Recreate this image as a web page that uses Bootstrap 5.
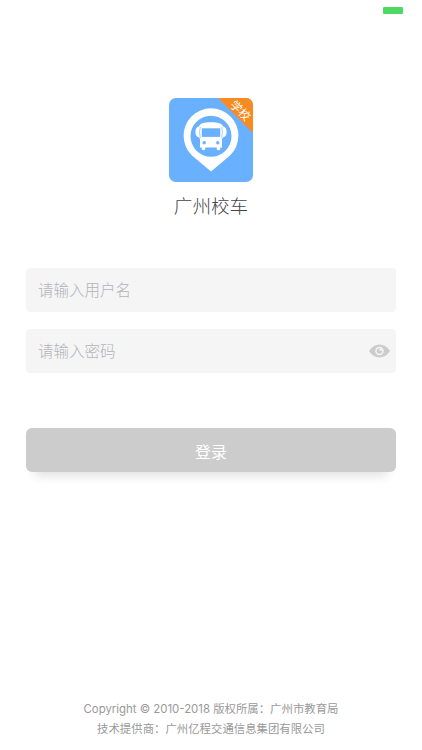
<!DOCTYPE html>
<html lang="zh-CN">
<head>
<meta charset="utf-8">
<meta name="viewport" content="width=device-width, initial-scale=1">
<title>广州校车</title>
<link href="https://cdn.jsdelivr.net/npm/bootstrap@5.3.0/dist/css/bootstrap.min.css" rel="stylesheet">
<style>
body{font-family:Inter,"Noto Sans CJK SC",sans-serif;height:750px;overflow:hidden}
.status-strip{height:98px;padding:7px 19px 0}
.battery{width:20px;height:7px;border-radius:1px;background:#4cd964}
.app-logo{width:84px;height:84px}
.app-name{font-size:18.6px;line-height:28px;margin-top:10px;color:#444;font-weight:300}
.login-form{margin-top:47.500px;padding:0 26px}
.login-form .field{height:44.500px;background:#f5f5f5;border-radius:4px;padding:0 6px 0 12px}
.login-form .field + .field{margin-top:16.500px}
.field .form-control{font-size:15.5px;line-height:24px;font-weight:300;margin-top:2px}
.field .form-control::placeholder{color:#b3b3b9;opacity:1}
.login-btn{height:44.500px;margin-top:54.500px;border-radius:6px;background:#ccc;color:#fff;font-size:16px;box-shadow:0 12px 12px -9px rgba(0,0,0,.14)}
.login-btn,.login-btn:hover{background:#ccc;color:#fff}
.copyright{font-size:11.4px;line-height:20px;color:#999;padding-bottom:11px}
</style>
</head>
<body class="bg-white d-flex flex-column">
<header class="status-strip d-flex justify-content-end flex-shrink-0"><span class="battery"></span></header>
<main class="flex-grow-1">
  <div class="d-flex flex-column align-items-center">
    <svg class="app-logo" viewBox="0 0 84 84" role="img" aria-label="广州校车">
      <rect width="84" height="84" rx="7" fill="#69b1ff"/>
      <path fill="#f78b21" d="M49 0h28a7 7 0 0 1 7 7v28z"/>
      <text transform="translate(71.5 12.5) rotate(45)" text-anchor="middle" y="4.300" font-size="11.500" fill="#fff">学校</text>
      <path fill="#fff" fill-rule="evenodd" d="M42 73.5 23 57.5A27.4 27.4 0 1 1 61 57.5ZM42 17.7a20.5 20.5 0 1 0 0 41a20.5 20.5 0 1 0 0-41Z"/>
      <path fill="#fff" d="M29.800 28.500C31 25.500 35 24.300 42 24.300S53 25.500 54.200 28.500Q57.600 29 57.600 34Q57.600 38.500 54.200 39.300L53 41V49.500H51.200V51.500Q49.500 53 47.800 51.500V49.500H36.200V51.500Q34.500 53 32.800 51.500V49.500H31V41L29.800 39.300Q26.400 38.500 26.400 34Q26.400 29 29.800 28.500Z"/>
      <path fill="#69b1ff" d="M32.800 30.300h18.400v8.600H32.800z"/>
      <path fill="none" stroke="#69b1ff" stroke-width=".6" d="M31.300 29Q29.800 34 31.300 40M52.700 29Q54.200 34 52.700 40"/>
      <circle cx="35.200" cy="44.700" r="1.700" fill="#69b1ff"/><circle cx="48.800" cy="44.700" r="1.700" fill="#69b1ff"/>
    </svg>
    <h1 class="app-name mb-0">广州校车</h1>
  </div>
  <form class="login-form">
    <div class="field d-flex align-items-center">
      <input class="form-control border-0 bg-transparent shadow-none p-0" type="text" placeholder="请输入用户名" aria-label="用户名">
    </div>
    <div class="field d-flex align-items-center">
      <input class="form-control border-0 bg-transparent shadow-none p-0" type="password" placeholder="请输入密码" aria-label="密码">
      <svg class="flex-shrink-0" width="21" height="14" viewBox="0 0 21 14" aria-hidden="true">
        <path fill="#ccc" d="M0 7C3 2.500 6.500.5 10.500.5S18 2.500 21 7C18 11.500 14.500 13.500 10.500 13.500S3 11.500 0 7Z"/>
        <circle cx="10.500" cy="7" r="4.300" fill="#f5f5f5"/>
        <circle cx="10.500" cy="7" r="2.800" fill="#ccc"/>
        <circle cx="11.700" cy="5.800" r="1.300" fill="#f5f5f5"/>
      </svg>
    </div>
    <button class="login-btn btn border-0 w-100 px-0 pb-0 pt-1" type="button">登录</button>
  </form>
</main>
<footer class="copyright text-center flex-shrink-0">
  <div>Copyright © 2010-2018 版权所属：广州市教育局</div>
  <div>技术提供商：广州亿程交通信息集团有限公司</div>
</footer>
<script src="https://cdn.jsdelivr.net/npm/bootstrap@5.3.0/dist/js/bootstrap.bundle.min.js"></script>
</body>
</html>
